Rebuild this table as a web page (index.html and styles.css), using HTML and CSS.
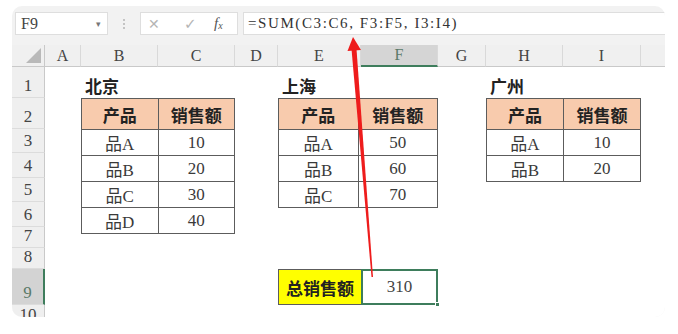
FILE: index.html
```html
<!DOCTYPE html>
<html lang="zh">
<head>
<meta charset="utf-8">
<link rel="stylesheet" href="styles.css">
</head>
<body>
<div class="card">
  <div class="fbar">
    <div class="namebox"><span>F9</span><span class="dd">▾</span></div>
    <div class="sep"><span></span><span></span><span></span></div>
    <div class="fnbox">
      <span class="ic ic-x">✕</span>
      <span class="ic ic-ok">✓</span>
      <span class="ic ic-fx"><i>f</i><sub>x</sub></span>
    </div>
    <div class="input">=SUM(C3:C6, F3:F5, I3:I4)</div>
  </div>
  <div class="sheet">
    <div class="ch corner"><span class="tri"></span></div>
    <div class="ch">A</div>
    <div class="ch">B</div>
    <div class="ch">C</div>
    <div class="ch">D</div>
    <div class="ch">E</div>
    <div class="ch sel-c">F</div>
    <div class="ch">G</div>
    <div class="ch">H</div>
    <div class="ch">I</div>
    <div class="ch last"></div>

    <div class="rh">1</div>
    <div class="rh">2</div>
    <div class="rh">3</div>
    <div class="rh">4</div>
    <div class="rh">5</div>
    <div class="rh">6</div>
    <div class="rh">7</div>
    <div class="rh">8</div>
    <div class="rh sel-r">9</div>
    <div class="rh">10</div>

    <div class="title t-bj">北京</div>
    <div class="title t-sh">上海</div>
    <div class="title t-gz">广州</div>

    <div class="tblwrap w-bj">
      <table class="tbl">
        <tr class="hd"><th>产品</th><th>销售额</th></tr>
        <tr class="r24"><td>品A</td><td>10</td></tr>
        <tr class="r25"><td>品B</td><td>20</td></tr>
        <tr class="r24"><td>品C</td><td>30</td></tr>
        <tr class="r25"><td>品D</td><td>40</td></tr>
      </table>
    </div>
    <div class="tblwrap w-sh">
      <table class="tbl">
        <tr class="hd"><th>产品</th><th>销售额</th></tr>
        <tr class="r24"><td>品A</td><td>50</td></tr>
        <tr class="r25"><td>品B</td><td>60</td></tr>
        <tr class="r24"><td>品C</td><td>70</td></tr>
      </table>
    </div>
    <div class="tblwrap w-gz">
      <table class="tbl">
        <tr class="hd"><th>产品</th><th>销售额</th></tr>
        <tr class="r24"><td>品A</td><td>10</td></tr>
        <tr class="r25"><td>品B</td><td>20</td></tr>
      </table>
    </div>

    <div class="total-label">总销售额</div>
    <div class="total-val">310<span class="handle"></span></div>
  </div>
</div>
<svg class="arrow" width="678" height="334" viewBox="0 0 678 334">
  <polygon points="351.5,49 356.5,49 373,277 371.5,277" fill="#ee1c1c"/>
  <polygon points="353,37 347.5,51 361,50" fill="#ee1c1c"/>
</svg>
</body>
</html>
```
FILE: styles.css
```css
* { box-sizing: border-box; }
html, body { margin: 0; padding: 0; background: #fff; }
body { width: 678px; height: 334px; position: relative; overflow: hidden; }

.card {
  margin: 6px 0 0 12px;
  width: 653px;
  height: 311px;
  border-radius: 10px;
  overflow: hidden;
  background: #f2f2f2;
  display: flex;
  flex-direction: column;
  font-family: "Liberation Serif", "Noto Sans CJK SC", serif;
  color: #333;
}

.fbar {
  height: 39px;
  flex: none;
  display: flex;
  align-items: flex-start;
  padding: 6px 0 0 3px;
}
.namebox {
  width: 93px;
  height: 23px;
  background: #fff;
  border: 1px solid #dedede;
  display: flex;
  align-items: center;
  justify-content: space-between;
  padding: 0 6px 0 5px;
  font-size: 16px;
  color: #444;
}
.namebox .dd { font-size: 9px; color: #777; }
.sep {
  width: 32px;
  height: 23px;
  display: flex;
  flex-direction: column;
  align-items: center;
  justify-content: center;
  gap: 2px;
}
.sep span { width: 2px; height: 2px; background: #c4c4c4; }
.fnbox {
  width: 98px;
  height: 23px;
  background: #fff;
  border: 1px solid #dedede;
  display: flex;
  align-items: center;
  padding-left: 7px;
}
.ic { color: #b5b5b5; font-family: "DejaVu Sans", sans-serif; }
.ic-x { font-size: 14px; width: 36px; }
.ic-ok { font-size: 15px; width: 30px; }
.ic-fx { color: #555; font-family: "Liberation Serif", serif; font-size: 15px; }
.ic-fx sub { font-size: 10px; font-style: italic; vertical-align: -1px; }
.input {
  flex: 1;
  height: 23px;
  margin-left: 5px;
  background: #fff;
  border: 1px solid #dedede;
  border-right: none;
  padding-left: 4px;
  font-size: 15px;
  letter-spacing: 1.6px;
  line-height: 21px;
  color: #333;
}

.sheet {
  flex: 1;
  display: grid;
  grid-template-columns: 33px 36px 77px 77px 43px 83px 77px 48px 77px 78px 1fr;
  grid-template-rows: 22px 31px 31px 24px 25px 24px 25px 21px 21px 36px 1fr;
  background: #fff;
}
.ch {
  background: #f0f0f0;
  border-right: 1px solid #d9d9d9;
  border-bottom: 1px solid #c9c9c9;
  display: flex;
  align-items: center;
  justify-content: center;
  font-size: 16px;
  color: #444;
}
.ch.last { border-right: none; }
.corner { position: relative; border-right-color: #c9c9c9; }
.corner .tri {
  position: absolute;
  right: 3px;
  bottom: 3px;
  width: 0; height: 0;
  border-left: 15px solid transparent;
  border-bottom: 15px solid #b9b9b9;
}
.sel-c {
  background: #d5d5d5;
  border-bottom: 2px solid #3e7d5c;
  color: #5a7a68;
}
.rh {
  grid-column: 1;
  background: #efefef;
  border-bottom: 1px solid #dcdcdc;
  border-right: 1px solid #c9c9c9;
  display: flex;
  align-items: flex-end;
  justify-content: center;
  padding-bottom: 1px;
  font-size: 17px;
  color: #444;
}
.sel-r {
  background: #d3d3d3;
  border-right: 2px solid #3e7d5c;
  color: #5a7a68;
}

.title {
  grid-row: 2;
  align-self: end;
  font-weight: bold;
  font-size: 17px;
  color: #222;
  padding-left: 4px;
  line-height: 20px;
}
.t-bj { grid-column: 3; }
.t-sh { grid-column: 6; }
.t-gz { grid-column: 9; }

.tblwrap { align-self: start; }
.w-bj { grid-column: 3 / 5; grid-row: 3 / 8; }
.w-sh { grid-column: 6 / 8; grid-row: 3 / 7; }
.w-gz { grid-column: 9 / 11; grid-row: 3 / 6; }

.tbl {
  width: 100%;
  border-collapse: collapse;
  table-layout: fixed;
}
.tbl th, .tbl td {
  border: 1px solid #5c5c5c;
  text-align: center;
  padding: 0;
}
.tbl th {
  background: #f8cbad;
  font-weight: bold;
  font-size: 17px;
  color: #222;
  height: 31px;
}
.tbl td { font-size: 17px; color: #3a3a3a; }
.tbl .r24 td { height: 24px; }
.tbl .r25 td { height: 25px; }

.total-label {
  grid-column: 6;
  grid-row: 10;
  background: #ffff00;
  border: 1px solid #5c5c5c;
  border-right: none;
  display: flex;
  align-items: center;
  justify-content: center;
  font-weight: bold;
  font-size: 17px;
  color: #222;
}
.total-val {
  grid-column: 7;
  grid-row: 10;
  position: relative;
  border: 2px solid #3e7d5c;
  display: flex;
  align-items: center;
  justify-content: center;
  font-size: 17px;
  color: #444;
}
.handle {
  position: absolute;
  right: -4px;
  bottom: -4px;
  width: 5px;
  height: 5px;
  background: #3e7d5c;
  border: 1px solid #fff;
}

.arrow { position: absolute; left: 0; top: 0; pointer-events: none; }
```
